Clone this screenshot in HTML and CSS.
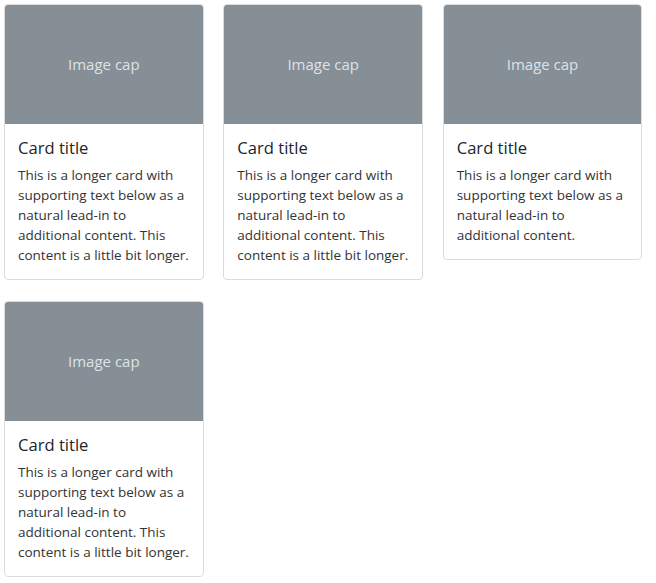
FILE: index.html
```html
<!DOCTYPE html>
<html>
<head>
<meta charset="utf-8">
<link rel="stylesheet" href="styles.css">
</head>
<body>
<div class="grid">
  <div class="card full">
    <div class="cap">Image cap</div>
    <div class="body">
      <h5 class="title">Card title</h5>
      <p class="text">This is a longer card with supporting text below as a natural lead-in to additional content. This content is a little bit longer.</p>
    </div>
  </div>
  <div class="card full">
    <div class="cap">Image cap</div>
    <div class="body">
      <h5 class="title">Card title</h5>
      <p class="text">This is a longer card with supporting text below as a natural lead-in to additional content. This content is a little bit longer.</p>
    </div>
  </div>
  <div class="card">
    <div class="cap">Image cap</div>
    <div class="body">
      <h5 class="title">Card title</h5>
      <p class="text">This is a longer card with supporting text below as a natural lead-in to additional content.</p>
    </div>
  </div>
  <div class="card full">
    <div class="cap">Image cap</div>
    <div class="body">
      <h5 class="title">Card title</h5>
      <p class="text">This is a longer card with supporting text below as a natural lead-in to additional content. This content is a little bit longer.</p>
    </div>
  </div>
</div>
</body>
</html>
```
FILE: styles.css
```css
html, body {
  margin: 0;
  padding: 0;
  background: #fff;
}
body {
  font-family: "Open Sans", "Noto Sans CJK KR", sans-serif;
  color: #212529;
}
.grid {
  display: grid;
  grid-template-columns: repeat(3, 199.67px);
  column-gap: 19.7px;
  row-gap: 21px;
  padding: 4px;
  align-items: start;
}
.card {
  border: 1px solid #dcdcdc;
  border-radius: 4px;
  overflow: hidden;
  background: #fff;
}
.card.full {
  align-self: stretch;
}
.cap {
  height: 119px;
  background: #868e96;
  color: #dee2e6;
  display: flex;
  align-items: center;
  justify-content: center;
  font-size: 15px;
  line-height: 20px;
  padding-bottom: 2px;
  box-sizing: border-box;
}
.body {
  padding: 13px 13px 14px;
}
.title {
  margin: 0 0 6px;
  font-size: 16.6px;
  font-weight: 400;
  line-height: 22px;
  color: #212529;
}
.text {
  margin: 0;
  font-size: 13.5px;
  line-height: 20px;
  color: #333;
}
```
